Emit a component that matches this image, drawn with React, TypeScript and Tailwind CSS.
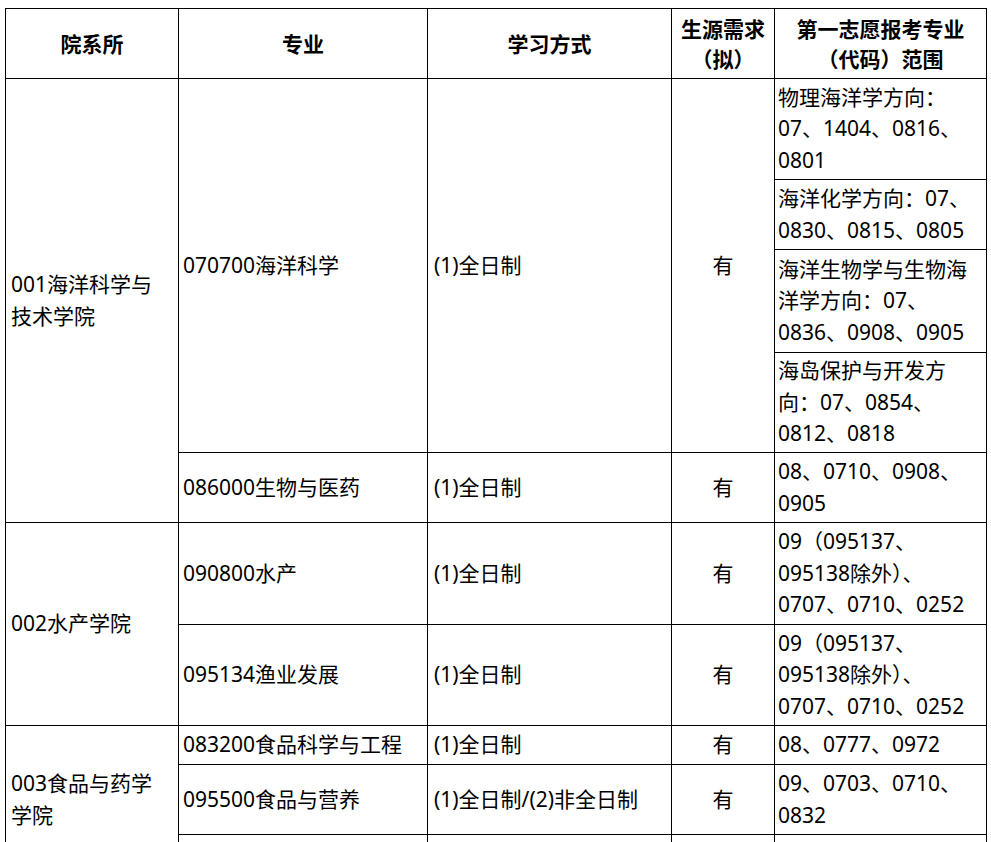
import React from "react";

const td = "border border-black px-[6px] align-middle";
const c1 = "border border-black pl-[5px] pr-[4px] align-middle";
const c2 = "border border-black pl-[4px] pr-[4px] align-middle";
const c5 = "border border-black pl-[3px] pr-[2px] align-middle whitespace-nowrap";

export default function App() {
  return (
    <div className="bg-white min-h-[842px] pt-[8px] pl-[5px] text-black font-['Noto_Sans','Noto_Sans_CJK_SC',sans-serif] text-[21px] leading-[31.5px]">
      <table className="table-fixed border-collapse w-[981px]">
        <colgroup>
          <col className="w-[173px]" />
          <col className="w-[249px]" />
          <col className="w-[244px]" />
          <col className="w-[103px]" />
          <col className="w-[212px]" />
        </colgroup>
        <tbody>
          <tr className="h-[70px] font-bold leading-[30px]">
            <td className={`${td} text-center`}>院系所</td>
            <td className={`${td} text-center`}>专业</td>
            <td className={`${td} text-center`}>学习方式</td>
            <td className={`${td} text-center px-0 whitespace-nowrap`}>
              生源需求
              <br />
              （拟）
            </td>
            <td className={`${td} text-center px-0 whitespace-nowrap`}>
              第一志愿报考专业
              <br />
              （代码）范围
            </td>
          </tr>
          <tr className="h-[101px]">
            <td className={c1} rowSpan={5}>
              001海洋科学与
              <br />
              技术学院
            </td>
            <td className={c2} rowSpan={4}>
              070700海洋科学
            </td>
            <td className={td} rowSpan={4}>
              (1)全日制
            </td>
            <td className={`${td} text-center`} rowSpan={4}>
              有
            </td>
            <td className={c5}>
              物理海洋学方向：
              <br />
              07、1404、0816、
              <br />
              0801
            </td>
          </tr>
          <tr className="h-[70px]">
            <td className={c5}>
              海洋化学方向：07、
              <br />
              0830、0815、0805
            </td>
          </tr>
          <tr className="h-[103px]">
            <td className={c5}>
              海洋生物学与生物海
              <br />
              洋学方向：07、
              <br />
              0836、0908、0905
            </td>
          </tr>
          <tr className="h-[100px]">
            <td className={c5}>
              海岛保护与开发方
              <br />
              向：07、0854、
              <br />
              0812、0818
            </td>
          </tr>
          <tr className="h-[70px]">
            <td className={c2}>086000生物与医药</td>
            <td className={td}>(1)全日制</td>
            <td className={`${td} text-center`}>有</td>
            <td className={c5}>
              08、0710、0908、
              <br />
              0905
            </td>
          </tr>
          <tr className="h-[102px]">
            <td className={c1} rowSpan={2}>
              002水产学院
            </td>
            <td className={c2}>090800水产</td>
            <td className={td}>(1)全日制</td>
            <td className={`${td} text-center`}>有</td>
            <td className={c5}>
              09（095137、
              <br />
              095138除外）、
              <br />
              0707、0710、0252
            </td>
          </tr>
          <tr className="h-[101px]">
            <td className={c2}>095134渔业发展</td>
            <td className={td}>(1)全日制</td>
            <td className={`${td} text-center`}>有</td>
            <td className={c5}>
              09（095137、
              <br />
              095138除外）、
              <br />
              0707、0710、0252
            </td>
          </tr>
          <tr className="h-[39px]">
            <td className={c1} rowSpan={3}>
              003食品与药学
              <br />
              学院
            </td>
            <td className={c2}>083200食品科学与工程</td>
            <td className={td}>(1)全日制</td>
            <td className={`${td} text-center`}>有</td>
            <td className={c5}>08、0777、0972</td>
          </tr>
          <tr className="h-[70px]">
            <td className={c2}>095500食品与营养</td>
            <td className={`${td} whitespace-nowrap`}>(1)全日制/(2)非全日制</td>
            <td className={`${td} text-center`}>有</td>
            <td className={c5}>
              09、0703、0710、
              <br />
              0832
            </td>
          </tr>
          <tr className="h-[39px]">
            <td className={c2}></td>
            <td className={td}></td>
            <td className={td}></td>
            <td className={c5}></td>
          </tr>
        </tbody>
      </table>
    </div>
  );
}
